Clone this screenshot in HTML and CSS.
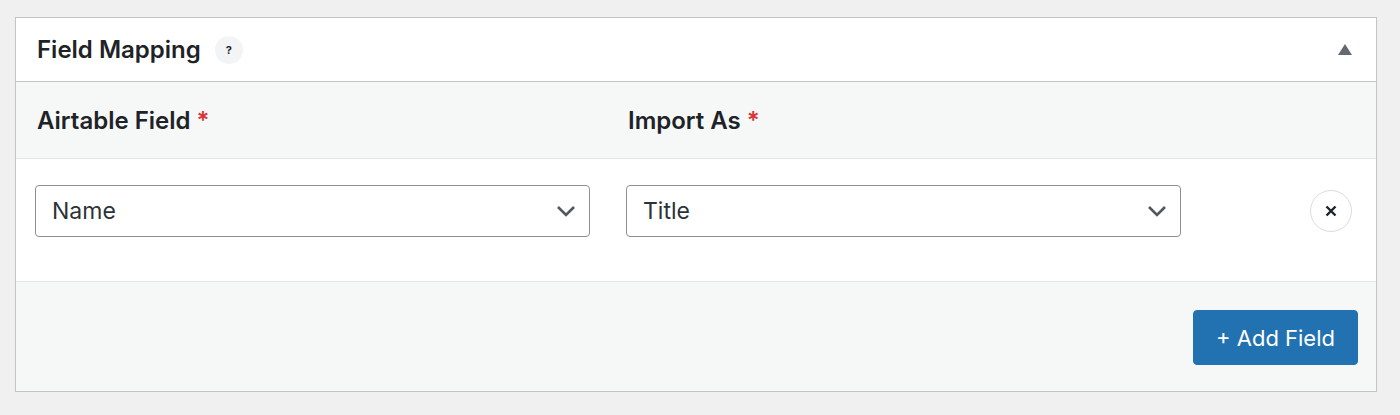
FILE: index.html
```html
<!DOCTYPE html>
<html>
<head>
<meta charset="utf-8">
<link rel="stylesheet" href="styles.css">
</head>
<body>
<div class="panel">
  <div class="panel-head">
    <div class="title-wrap">
      <h2 class="title">Field Mapping</h2>
      <span class="help">?</span>
    </div>
    <span class="toggle"></span>
  </div>
  <div class="labels">
    <div class="label">Airtable Field <span class="req">*</span></div>
    <div class="label">Import As <span class="req">*</span></div>
    <div></div>
  </div>
  <div class="row">
    <div class="select">
      <span>Name</span>
      <svg class="chev" width="20" height="12" viewBox="0 0 20 12"><path d="M2 2 L10 10 L18 2" fill="none" stroke="#50575e" stroke-width="2.6"/></svg>
    </div>
    <div class="select">
      <span>Title</span>
      <svg class="chev" width="20" height="12" viewBox="0 0 20 12"><path d="M2 2 L10 10 L18 2" fill="none" stroke="#50575e" stroke-width="2.6"/></svg>
    </div>
    <div class="remove-cell">
      <span class="remove">
        <svg width="12" height="12" viewBox="0 0 12 12"><path d="M1.5 1.5 L10.5 10.5 M10.5 1.5 L1.5 10.5" stroke="#1d2327" stroke-width="2.4"/></svg>
      </span>
    </div>
  </div>
  <div class="foot">
    <button class="add">+ Add Field</button>
  </div>
</div>
</body>
</html>
```

FILE: styles.css
```css
html, body {
  margin: 0;
  padding: 0;
  background: #f0f0f1;
  font-family: Inter, "Noto Sans", "Liberation Sans", sans-serif;
  color: #1d2327;
}
body {
  padding: 17px 23px 0 15px;
}
.panel {
  border: 1px solid #c3c4c7;
  background: #fff;
}
.panel-head {
  height: 63px;
  display: flex;
  align-items: center;
  justify-content: space-between;
  padding: 0 24px 0 21px;
  border-bottom: 1px solid #c3c4c7;
}
.title-wrap {
  display: flex;
  align-items: center;
}
.title {
  margin: 0;
  font-size: 24px;
  font-weight: 600;
  letter-spacing: 0;
}
.help {
  margin-left: 14px;
  width: 28px;
  height: 28px;
  border-radius: 50%;
  background: #f3f4f5;
  display: flex;
  align-items: center;
  justify-content: center;
  font-size: 11px;
  font-weight: 700;
  color: #1d2327;
}
.toggle {
  width: 0;
  height: 0;
  border-left: 7px solid transparent;
  border-right: 7px solid transparent;
  border-bottom: 11px solid #646970;
}
.labels, .row {
  display: grid;
  grid-template-columns: 555px 555px 1fr;
  column-gap: 36px;
  padding-left: 19px;
}
.labels {
  height: 76px;
  align-items: center;
  background: #f6f7f7;
  border-bottom: 1px solid #e4e5e7;
}
.label {
  padding-left: 2px;
  font-size: 24px;
  font-weight: 600;
}
.req {
  color: #d63638;
}
.row {
  padding-top: 26px;
  padding-bottom: 44px;
  align-items: center;
  background: #fff;
  border-bottom: 1px solid #e4e5e7;
}
.select {
  height: 50px;
  border: 1px solid #8c8f94;
  border-radius: 4px;
  display: flex;
  align-items: center;
  justify-content: space-between;
  padding: 0 13px 0 16px;
  font-size: 23px;
  color: #2c3338;
}
.remove-cell {
  display: flex;
  justify-content: flex-end;
  padding-right: 24px;
}
.remove {
  width: 40px;
  height: 40px;
  border: 1px solid #dcdcde;
  border-radius: 50%;
  display: flex;
  align-items: center;
  justify-content: center;
  background: #fff;
}
.foot {
  background: #f6f7f7;
  height: 109px;
  display: flex;
  align-items: center;
  justify-content: flex-end;
  padding-right: 18px;
}
.add {
  width: 165px;
  height: 55px;
  background: #2271b1;
  color: #fff;
  border: 1px solid #2271b1;
  border-radius: 4px;
  font-family: inherit;
  font-size: 22px;
  margin-top: 2px;
}
```
